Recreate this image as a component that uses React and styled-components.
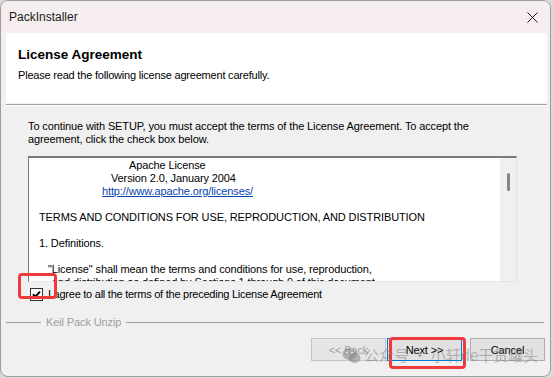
import React from "react";
import styled, { createGlobalStyle } from "styled-components";

const GlobalStyle = createGlobalStyle`
  html, body {
    margin: 0;
    padding: 0;
    width: 553px;
    height: 378px;
    overflow: hidden;
    background: #d9d9dc;
  }
`;

const Window = styled.div`
  position: relative;
  box-sizing: border-box;
  width: 551px;
  height: 377px;
  background: #f0f0f0;
  border: 1px solid #9d9d9d;
  border-radius: 8px;
  overflow: hidden;
  display: flex;
  flex-direction: column;
  font-family: "Liberation Sans", Arial, sans-serif;
  font-size: 11px;
  letter-spacing: -0.12px;
  color: #000;
`;

const TitleBar = styled.div`
  height: 32px;
  flex: none;
  background: #f6eeee;
  display: flex;
  align-items: center;
  justify-content: space-between;
  padding-left: 8px;
`;

const Title = styled.span`
  font-size: 12px;
  letter-spacing: 0;
  color: #1b1b1b;
`;

const CloseButton = styled.div`
  width: 30px;
  height: 32px;
  display: flex;
  align-items: center;
  justify-content: center;
  margin-right: 3px;
`;

const Body = styled.div`
  flex: 1;
  display: flex;
  flex-direction: column;
  padding: 0 3px 0 5px;
`;

const Header = styled.div`
  height: 70px;
  box-sizing: border-box;
  background: #fff;
  padding: 14px 0 0 12px;
`;

const HeaderTitle = styled.div`
  font-size: 13.5px;
  font-weight: bold;
  letter-spacing: 0;
  line-height: 16px;
`;

const HeaderSub = styled.div`
  margin-top: 6px;
  line-height: 13px;
  letter-spacing: -0.2px;
`;

const Rule = styled.div`
  margin-top: 1px;
  border-top: 1px solid #a0a0a0;
  border-bottom: 1px solid #fff;
`;

const Content = styled.div`
  padding: 14px 30px 0 22px;
`;

const Intro = styled.div`
  line-height: 13px;
`;

const LicenseBox = styled.div`
  margin-top: 10px;
  height: 126px;
  box-sizing: border-box;
  background: #fff;
  border-top: 2px solid #7a7a7a;
  border-left: 1px solid #7a7a7a;
  border-right: 1px solid #e3e3e3;
  border-bottom: 1px solid #e3e3e3;
  display: flex;
`;

const LicenseText = styled.div`
  flex: 1;
  overflow: hidden;
  padding-top: 1px;
  line-height: 13px;
`;

const Line = styled.div`
  height: 13px;
  white-space: nowrap;
  padding-left: ${(p) => p.$indent || 0}px;
`;

const Link = styled.span`
  color: #0645ad;
  text-decoration: underline;
`;

const ScrollTrack = styled.div`
  width: 16px;
  background: #f0f0f0;
  display: flex;
  justify-content: center;
`;

const Thumb = styled.div`
  margin-top: 15px;
  width: 3px;
  height: 18px;
  border-radius: 2px;
  background: #858585;
`;

const AgreeRow = styled.div`
  position: relative;
  display: flex;
  align-items: center;
  gap: 5px;
  height: 22px;
  margin: 0 0 0 2px;
  padding-top: 1px;
  letter-spacing: -0.25px;
`;

const Highlight = styled.div`
  position: absolute;
  box-sizing: border-box;
  border: 3px solid #ee3a3d;
  border-radius: 4px;
  pointer-events: none;
`;

const GroupLine = styled.div`
  display: flex;
  align-items: center;
  margin-top: 11px;
  margin-right: 3px;
  color: #a0a0a0;
`;

const GroupRule = styled.div`
  flex: ${(p) => (p.$grow ? 1 : "none")};
  width: ${(p) => (p.$grow ? "auto" : "35px")};
  border-top: 1px solid #a0a0a0;
`;

const GroupLabel = styled.span`
  padding: 0 5px;
  line-height: 13px;
`;

const ButtonRow = styled.div`
  display: flex;
  justify-content: flex-end;
  margin-top: 9px;
  padding-right: 2px;
`;

const Button = styled.div`
  position: relative;
  box-sizing: border-box;
  width: 75px;
  height: 23px;
  margin-left: ${(p) => p.$gap || 0}px;
  display: flex;
  align-items: center;
  justify-content: center;
  background: ${(p) => (p.$disabled ? "#e6e6e6" : "#e1e1e1")};
  border: 1px solid ${(p) => (p.$default ? "#0078d7" : p.$disabled ? "#c5c5c5" : "#adadad")};
  color: ${(p) => (p.$disabled ? "#a0a0a0" : "#000")};
`;

const Watermark = styled.div`
  position: absolute;
  left: 341px;
  top: 344px;
  display: flex;
  align-items: center;
  gap: 3px;
  font-family: "Noto Sans CJK SC", "Noto Sans", sans-serif;
  font-size: 15px;
  line-height: 20px;
  letter-spacing: 0;
  color: rgba(130, 130, 130, 0.55);
  pointer-events: none;
  white-space: nowrap;
`;

function CheckBox() {
  return (
    <svg width="13" height="13" viewBox="0 0 13 13">
      <rect x="0.5" y="0.5" width="12" height="12" fill="#fff" stroke="#333" />
      <path d="M3 6.2 L5.3 8.6 L10 3.6" fill="none" stroke="#000" strokeWidth="2" />
    </svg>
  );
}

function WeChatIcon() {
  return (
    <svg width="19" height="17" viewBox="0 0 19 17">
      <ellipse cx="7.5" cy="7" rx="7" ry="6" fill="rgba(130,130,130,0.55)" />
      <ellipse cx="12.5" cy="11" rx="6" ry="5" fill="rgba(130,130,130,0.55)" />
      <circle cx="5" cy="5.5" r="1" fill="#f0f0f0" />
      <circle cx="10" cy="5.5" r="1" fill="#f0f0f0" />
    </svg>
  );
}

export default function App() {
  return (
    <>
      <GlobalStyle />
      <Window>
        <TitleBar>
          <Title>PackInstaller</Title>
          <CloseButton>
            <svg width="11" height="11" viewBox="0 0 11 11">
              <path d="M0.5 0.5 L10.5 10.5 M10.5 0.5 L0.5 10.5" stroke="#1b1b1b" strokeWidth="1" />
            </svg>
          </CloseButton>
        </TitleBar>
        <Body>
          <Header>
            <HeaderTitle>License Agreement</HeaderTitle>
            <HeaderSub>Please read the following license agreement carefully.</HeaderSub>
          </Header>
          <Rule />
          <Content>
            <Intro>
              To continue with SETUP, you must accept the terms of the License Agreement. To accept the
              <br />
              agreement, click the check box below.
            </Intro>
            <LicenseBox>
              <LicenseText>
                <Line $indent={100}>Apache License</Line>
                <Line $indent={82}>Version 2.0, January 2004</Line>
                <Line $indent={73}>
                  <Link>http://www.apache.org/licenses/</Link>
                </Line>
                <Line />
                <Line $indent={10}>TERMS AND CONDITIONS FOR USE, REPRODUCTION, AND DISTRIBUTION</Line>
                <Line />
                <Line $indent={10}>1. Definitions.</Line>
                <Line />
                <Line $indent={19}>"License" shall mean the terms and conditions for use, reproduction,</Line>
                <Line $indent={23}>and distribution as defined by Sections 1 through 9 of this document.</Line>
              </LicenseText>
              <ScrollTrack>
                <Thumb />
              </ScrollTrack>
            </LicenseBox>
            <AgreeRow>
              <CheckBox />
              <span>I agree to all the terms of the preceding License Agreement</span>
              <Highlight style={{ left: -12, top: -9, width: 39, height: 26 }} />
            </AgreeRow>
          </Content>
          <GroupLine>
            <GroupRule />
            <GroupLabel>Keil Pack Unzip</GroupLabel>
            <GroupRule $grow />
          </GroupLine>
          <ButtonRow>
            <Button $disabled>&lt;&lt; Back</Button>
            <Button $default $gap={1}>
              Next &gt;&gt;
              <Highlight style={{ left: 1, top: -2, width: 77, height: 32 }} />
            </Button>
            <Button $gap={8}>Cancel</Button>
          </ButtonRow>
        </Body>
        <Watermark>
          <WeChatIcon />
          <span>公众号 · 小轩de干货罐头</span>
        </Watermark>
      </Window>
    </>
  );
}
